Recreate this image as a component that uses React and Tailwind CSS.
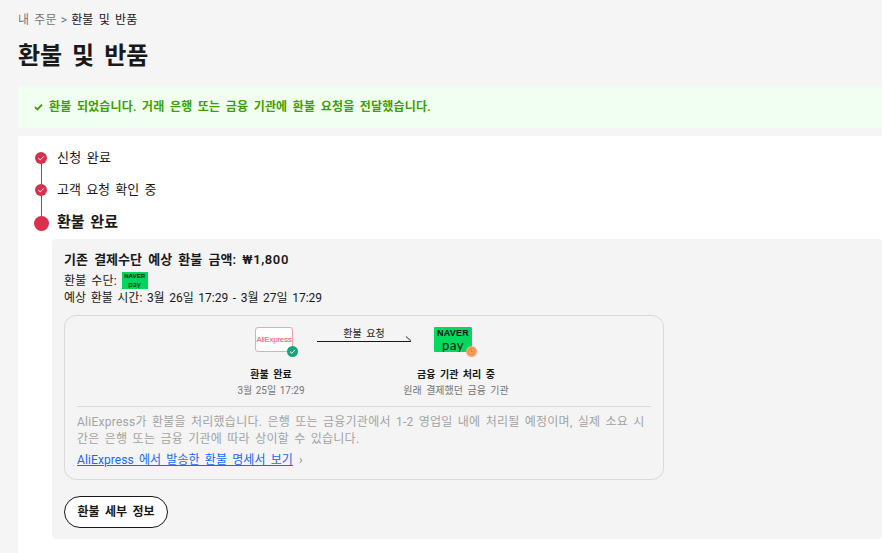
import React from "react";

function StepDot() {
  return (
    <span className="flex h-3 w-3 items-center justify-center rounded-full bg-[#d9304c]">
      <svg width="8" height="8" viewBox="0 0 8 8" fill="none">
        <path d="M1.3 4.2 3.2 6 6.8 2.4" stroke="#fff" strokeWidth="1" />
      </svg>
    </span>
  );
}

function NaverPay({ small }) {
  return (
    <span className={small
      ? "flex h-[17px] w-[26px] flex-col items-center justify-center bg-[#03d45c] text-[#111] [word-spacing:0]"
      : "flex h-[25px] w-[38px] flex-col items-center justify-center rounded-[1px] bg-[#03d85f] text-[#111]"}>
      <span className={small ? "font-['Liberation_Sans'] text-[6px] font-bold leading-[7px]" : "font-['Liberation_Sans'] text-[9px] font-bold leading-[10px] tracking-[0.2px]"}>NAVER</span>
      <span className={small ? "font-['Lato'] text-[8px] leading-[9px]" : "font-['Lato'] text-[13px] leading-[14px] tracking-[0.5px]"}>pay</span>
    </span>
  );
}

export default function App() {
  return (
    <div className="h-[553px] w-[882px] overflow-hidden bg-[#f5f5f5] pl-[18px] font-['Roboto','Noto_Sans_CJK_KR',sans-serif] text-[#191919] [word-spacing:2px]">
      <div className="flex h-[39px] items-center text-xs tracking-[0.15px]">
        <span className="text-[#757575]">내 주문</span>
        <span className="mx-1 text-[#757575]">&gt;</span>
        <span>환불 및 반품</span>
      </div>
      <h1 className="flex h-[33px] items-center text-2xl font-bold leading-8 [word-spacing:4px]">환불 및 반품</h1>
      <div className="mt-[14px] flex h-[42px] items-center gap-[6px] bg-[#f0fff0] pl-[16px] text-xs font-semibold tracking-[0.18px] text-[#3f9e00] [word-spacing:2.3px]">
        <svg width="9" height="8" viewBox="0 0 9 8" fill="none">
          <path d="M1 4.2 3.4 6.4 8 1.6" stroke="#3f9e00" strokeWidth="1.8" />
        </svg>
        <span>환불 되었습니다. 거래 은행 또는 금융 기관에 환불 요청을 전달했습니다.</span>
      </div>
      <div className="mt-2 h-[417px] rounded-tl-[2px] bg-white pl-[16px] pt-[6px]">
        <div className="relative flex h-[32px] items-center">
          <span className="flex w-[14px] justify-center"><StepDot /></span>
          <span className="ml-[9px] text-[13px] tracking-[0.2px]">신청 완료</span>
          <span className="absolute left-[7px] top-[22px] h-[26px] w-[1px] bg-[#c9354f]" />
        </div>
        <div className="relative flex h-[32px] items-center">
          <span className="flex w-[14px] justify-center"><StepDot /></span>
          <span className="ml-[9px] text-[13px]">고객 요청 확인 중</span>
          <span className="absolute left-[7px] top-[22px] h-[26px] w-[1px] bg-[#c9354f]" />
        </div>
        <div className="flex h-[33px] items-center">
          <span className="h-[15px] w-[15px] translate-y-[1px] rounded-full bg-[#dc2f4c]" />
          <span className="ml-[8px] text-[15px] font-semibold">환불 완료</span>
        </div>
        <div className="ml-[18px] h-[300px] rounded-[4px] bg-[#f4f4f4] px-3 pt-[11px]">
          <div className="text-[13px] font-semibold leading-5 [word-spacing:3px]">기존 결제수단 예상 환불 금액: <span className="tracking-[0.6px]">₩1,800</span></div>
          <div className="mt-[1px] flex h-[19px] items-center gap-[5px] text-xs tracking-[0.1px]">
            <span>환불 수단:</span>
            <NaverPay small />
          </div>
          <div className="text-xs leading-[17px] [word-spacing:1.6px]">예상 환불 시간: 3월 26일 17:29 - 3월 27일 17:29</div>
          <div className="mt-2 h-[165px] w-[600px] rounded-xl border border-[#d9d9d9] px-3">
            <div className="relative flex h-[90px]">
              <div className="ml-[144px] flex w-[100px] flex-col items-center">
                <div className="relative mt-[11px] translate-x-[3px]">
                  <div className="flex h-[25px] w-[38px] items-center justify-center rounded-[3px] border border-[#f5a3ae] bg-white font-['Liberation_Sans'] text-[8px] tracking-[-0.3px] text-[#f0506e]">AliExpress</div>
                  <span className="absolute -bottom-[5px] -right-[5px] flex h-[11px] w-[11px] items-center justify-center rounded-full bg-[#12a67a]">
                    <svg width="7" height="7" viewBox="0 0 7 7" fill="none"><path d="M1 3.6 2.8 5.3 6 1.8" stroke="#fff" strokeWidth="1" /></svg>
                  </span>
                </div>
                <div className="mt-[15px] text-[10px] font-semibold leading-[16px]">환불 완료</div>
                <div className="text-[10px] leading-[16px] text-[#757575] [word-spacing:1px]">3월 25일 17:29</div>
              </div>
              <div className="absolute left-[240px] top-[11px] w-[94px] text-center text-[10px] leading-[13px]">환불 요청</div>
              <div className="absolute left-[240px] top-[25px] h-[1px] w-[94px] bg-[#191919]" />
              <svg className="absolute left-[328px] top-[20px]" width="8" height="6" viewBox="0 0 8 6" fill="none"><path d="M1 0.5 6 5" stroke="#777" strokeWidth="1.2" /></svg>
              <div className="ml-[45px] flex w-[180px] flex-col items-center">
                <div className="relative mt-[11px] -translate-x-[3px]">
                  <NaverPay />
                  <span className="absolute -bottom-[5px] -right-[5px] flex h-[11px] w-[11px] items-center justify-center rounded-full bg-[#f9a56e]">
                    <svg width="9" height="9" viewBox="0 0 9 9" fill="none"><circle cx="4.5" cy="4.5" r="3.2" stroke="#e57a35" strokeWidth="0.8" /><path d="M4.5 2.6V4.8H6.2" stroke="#d9702f" strokeWidth="0.8" /></svg>
                  </span>
                </div>
                <div className="mt-[15px] text-[10px] font-semibold leading-[16px]">금융 기관 처리 중</div>
                <div className="text-[10px] leading-[16px] text-[#757575]">원래 결제했던 금융 기관</div>
              </div>
            </div>
            <div className="break-all border-t border-[#d9d9d9] pt-[7px] text-xs leading-[17px] tracking-[0.25px] text-[#a3a3a3]">
              AliExpress가 환불을 처리했습니다. 은행 또는 금융기관에서 1-2 영업일 내에 처리될 예정이며, 실제 소요 시간은 은행 또는 금융 기관에 따라 상이할 수 있습니다.
            </div>
            <div className="mt-[3px] flex items-center text-xs leading-[18px] tracking-[0.1px]">
              <a className="text-[#1a66ff] underline">AliExpress 에서 발송한 환불 명세서 보기</a>
              <span className="ml-[6px] text-[#8a8a8a]">›</span>
            </div>
          </div>
          <button className="mt-4 flex h-8 w-[104px] items-center justify-center rounded-full border border-[#191919] bg-white text-xs font-semibold [word-spacing:2.5px]">환불 세부 정보</button>
        </div>
      </div>
    </div>
  );
}
